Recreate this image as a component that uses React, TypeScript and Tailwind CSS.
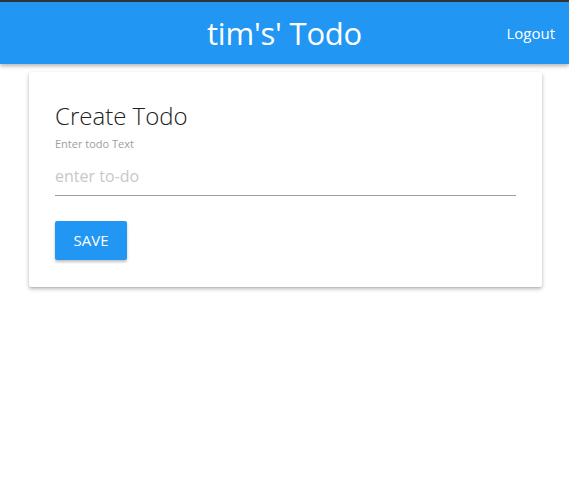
export default function App() {
  return (
    <div className="min-h-[478px] bg-white font-['Open_Sans',sans-serif]">
      {/* Navbar */}
      <nav className="relative h-[64px] border-t-2 border-[#333] bg-[#2196f3] text-white shadow-[0_2px_4px_rgba(0,0,0,0.3)]">
        <div className="flex h-full items-center justify-center">
          <span className="text-[31px] font-normal leading-none tracking-[-0.2px]">tim's' Todo</span>
        </div>
        <a className="absolute right-[14px] top-[24px] text-[15px] leading-none" href="#">
          Logout
        </a>
      </nav>

      {/* Card */}
      <main className="px-[29px] pt-[8px]">
        <div className="w-[513px] rounded-[2px] bg-white px-[26px] pb-[27px] pt-[30px] shadow-[0_2px_4px_rgba(0,0,0,0.25),0_1px_2px_rgba(0,0,0,0.1)]">
          <h2 className="text-[24px] font-light leading-[28px] text-[#222]">Create Todo</h2>
          <label className="mt-[8px] block text-[11px] leading-none text-[#9e9e9e]">Enter todo Text</label>
          <input
            className="mt-[6px] h-[41px] w-full border-b border-[#9e9e9e] bg-transparent pt-[1px] text-[16px] text-[#333] outline-none placeholder:text-[#c8c8c8]"
            placeholder="enter to-do"
          />
          <button className="mt-[25px] h-[39px] w-[72px] rounded-[2px] bg-[#2196f3] text-[15px] uppercase text-white shadow-[0_2px_3px_rgba(0,0,0,0.25)]">
            Save
          </button>
        </div>
      </main>
    </div>
  );
}
